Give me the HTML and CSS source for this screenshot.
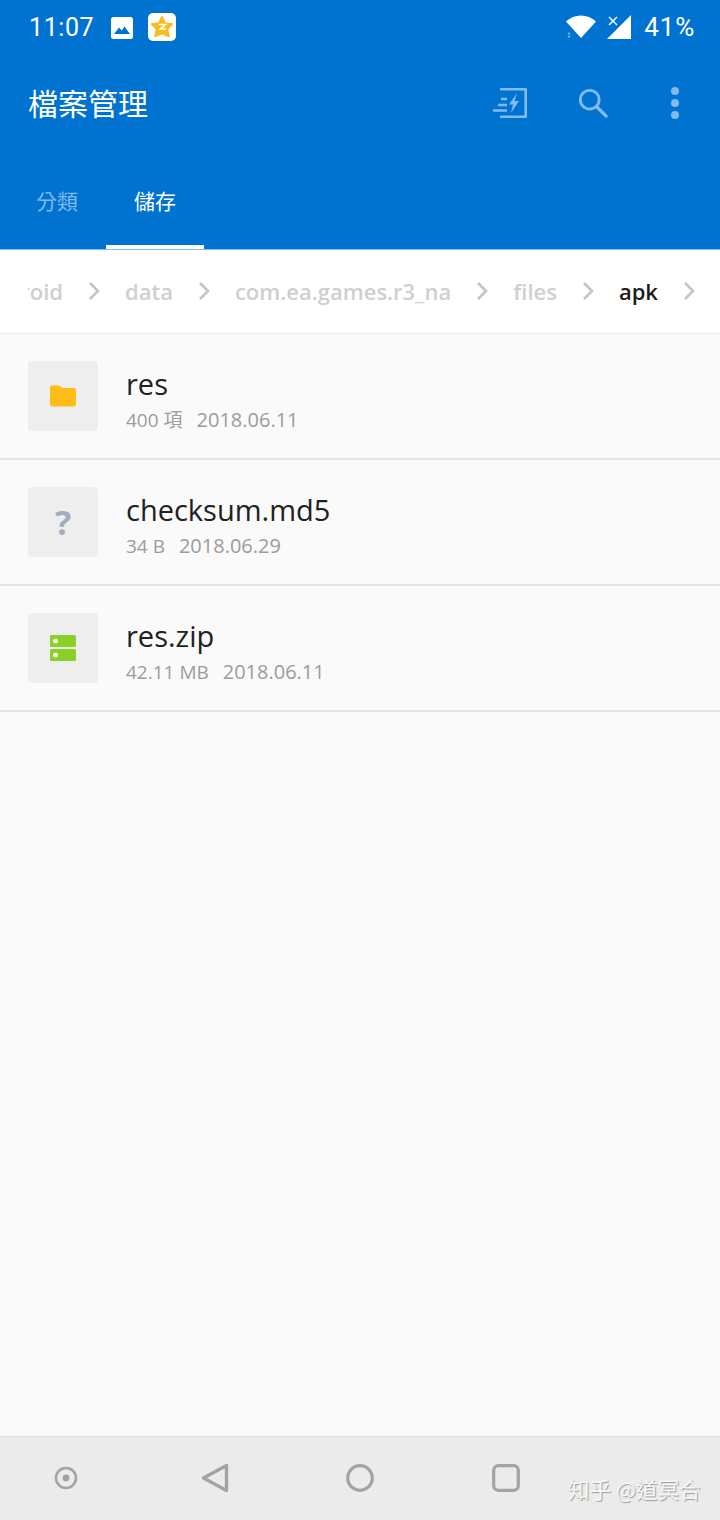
FILE: index.html
```html
<!DOCTYPE html>
<html lang="zh-Hant">
<head>
    <meta charset="UTF-8">
    <meta name="viewport" content="width=device-width, initial-scale=1.0">
    <title>檔案管理</title>
    <link rel="stylesheet" href="styles.css">
</head>
<body>
    <div class="phone">
        <!-- Blue header -->
        <header class="header">
            <div class="status-bar">
                <span class="clock">11:07</span>
                <svg class="notif-image" width="22" height="22" viewBox="0 0 22 22">
                    <rect width="22" height="22" rx="2.5" fill="#fff"/>
                    <path d="M3 17 L8 10.5 L10.8 13.6 L13.5 9.5 L19 17 Z" fill="#0073d1"/>
                </svg>
                <svg class="notif-app" width="28" height="28" viewBox="0 0 28 28">
                    <rect width="28" height="28" rx="5" fill="#fff"/>
                    <path d="M14 3.5 L17.2 10 L24.5 11 L19.5 16.2 L21 23.5 L14 20.5 L7 23.5 L8.5 16.2 L3.5 11 L10.8 10 Z" fill="#f5bd1e" stroke="#f5bd1e" stroke-width="1.5" stroke-linejoin="round"/>
                    <path d="M10.5 11.5 H17.5 L12.5 16 H18" fill="none" stroke="#fff" stroke-width="1.6"/>
                </svg>
                <span class="status-spacer"></span>
                <svg class="wifi" width="32" height="26" viewBox="0 0 32 26">
                    <path d="M1 7.5 C9 -0.5 23 -0.5 31 7.5 L16 24 Z" fill="#fff"/>
                    <path d="M4 18 l-1.6 2.2 h3.2 Z M4 24 l-1.6 -2.2 h3.2 Z" fill="#8fc4ee"/>
                </svg>
                <svg class="signal" width="26" height="26" viewBox="0 0 26 26">
                    <path d="M25 1 V25 H1 Z" fill="#fff"/>
                    <path d="M3 3 L11 11 M11 3 L3 11" stroke="#fff" stroke-width="1.4" fill="none"/>
                </svg>
                <span class="battery">41%</span>
            </div>

            <div class="toolbar">
                <h1 class="title">檔案管理</h1>
                <div class="actions">
                    <svg class="act-transfer" width="34" height="30" viewBox="0 0 34 30">
                        <path d="M7 1.3 H32.7 V28.7 H7" fill="none" stroke="#82bbee" stroke-width="2.6" stroke-linejoin="round"/>
                        <path d="M24 5 L16 16.5 H20 L18 25 L26 13 H21.5 Z" fill="#82bbee"/>
                        <path d="M8 11 H14 M5 17 H14 M0 22.5 H14" stroke="#82bbee" stroke-width="2.6" fill="none"/>
                    </svg>
                    <svg class="act-search" width="30" height="30" viewBox="0 0 32 32">
                        <circle cx="12.5" cy="12.5" r="10" fill="none" stroke="#82bbee" stroke-width="3"/>
                        <path d="M20 20 L30 30" stroke="#82bbee" stroke-width="3.4" stroke-linecap="round"/>
                    </svg>
                    <div class="act-more"><i></i><i></i><i></i></div>
                </div>
            </div>

            <nav class="tabs">
                <div class="tab">分類</div>
                <div class="tab active">儲存</div>
            </nav>
        </header>

        <!-- Path breadcrumb -->
        <div class="crumbs">
            <div class="crumb-cut"><span class="crumb">android</span></div>
            <svg class="chev" width="12" height="20" viewBox="0 0 12 20"><path d="M2 2 L10 10 L2 18"/></svg>
            <span class="crumb">data</span>
            <svg class="chev" width="12" height="20" viewBox="0 0 12 20"><path d="M2 2 L10 10 L2 18"/></svg>
            <span class="crumb">com.ea.games.r3_na</span>
            <svg class="chev" width="12" height="20" viewBox="0 0 12 20"><path d="M2 2 L10 10 L2 18"/></svg>
            <span class="crumb">files</span>
            <svg class="chev" width="12" height="20" viewBox="0 0 12 20"><path d="M2 2 L10 10 L2 18"/></svg>
            <span class="crumb current">apk</span>
            <svg class="chev" width="12" height="20" viewBox="0 0 12 20"><path d="M2 2 L10 10 L2 18"/></svg>
        </div>

        <!-- File list -->
        <main class="file-list">
            <div class="file-row">
                <div class="thumb">
                    <svg width="28" height="24" viewBox="0 0 28 24">
                        <path d="M1 4 Q1 1.5 3.5 1.5 H10 L13.5 4 H24.5 Q27 4 27 6.5 V19.5 Q27 22.5 24 22.5 H4 Q1 22.5 1 19.5 Z" fill="#fbbd16"/>
                    </svg>
                </div>
                <div class="file-info">
                    <div class="file-name">res</div>
                    <div class="file-meta"><span class="file-size">400 項</span><span>2018.06.11</span></div>
                </div>
            </div>
            <div class="file-row">
                <div class="thumb"><span class="unknown">?</span></div>
                <div class="file-info">
                    <div class="file-name">checksum.md5</div>
                    <div class="file-meta"><span class="file-size">34 B</span><span>2018.06.29</span></div>
                </div>
            </div>
            <div class="file-row">
                <div class="thumb">
                    <svg width="28" height="28" viewBox="0 0 28 28">
                        <rect x="1" y="1" width="26" height="12" rx="1.5" fill="#8ccf26"/>
                        <rect x="1" y="15" width="26" height="12" rx="1.5" fill="#8ccf26"/>
                        <circle cx="6.5" cy="7" r="2.5" fill="#eef6dc"/>
                        <circle cx="6.5" cy="21" r="2.5" fill="#eef6dc"/>
                    </svg>
                </div>
                <div class="file-info">
                    <div class="file-name">res.zip</div>
                    <div class="file-meta"><span class="file-size">42.11 MB</span><span>2018.06.11</span></div>
                </div>
            </div>
        </main>

        <!-- Android nav bar -->
        <footer class="nav-bar">
            <svg class="nav-recent" width="24" height="24" viewBox="0 0 24 24">
                <circle cx="12" cy="12" r="10" fill="none" stroke="#a3a3a3" stroke-width="2.6"/>
                <circle cx="12" cy="12" r="3.4" fill="#a3a3a3"/>
            </svg>
            <svg class="nav-back" width="28" height="30" viewBox="0 0 28 30">
                <path d="M25.5 2.5 V27.5 L2.5 15 Z" fill="none" stroke="#a3a3a3" stroke-width="3.4" stroke-linejoin="round"/>
            </svg>
            <svg width="28" height="28" viewBox="0 0 28 28">
                <circle cx="14" cy="14" r="12.3" fill="none" stroke="#a3a3a3" stroke-width="3.2"/>
            </svg>
            <svg width="28" height="28" viewBox="0 0 28 28">
                <rect x="1.7" y="1.7" width="24.6" height="24.6" rx="4.5" fill="none" stroke="#a3a3a3" stroke-width="3.2"/>
            </svg>
            <div class="watermark">知乎 @道冥合</div>
        </footer>
    </div>
</body>
</html>
```

FILE: styles.css
```css
body {
    margin: 0;
    font-family: Roboto, "Noto Sans CJK TC", sans-serif;
    background-color: #fafafa;
}

.phone {
    width: 720px;
    height: 1520px;
    display: flex;
    flex-direction: column;
    overflow: hidden;
}

/* Header */
.header {
    height: 250px;
    box-sizing: border-box;
    background-color: #0073d1;
    border-bottom: 1px solid #7cc0f5;
    color: #ffffff;
}

.status-bar {
    height: 54px;
    display: flex;
    align-items: center;
    padding: 0 25px 0 29px;
}

.clock {
    font-size: 25px;
    letter-spacing: 0.6px;
    width: 82px;
}

.notif-image {
    margin-right: 15px;
    margin-top: 1px;
}

.status-spacer {
    flex: 1;
}

.signal {
    margin: 0 12px 0 9px;
}

.battery {
    font-size: 26px;
    letter-spacing: 0.8px;
}

.toolbar {
    height: 100px;
    display: flex;
    align-items: flex-start;
    padding: 0 28px;
}

.title {
    margin: 26px 0 0;
    font-size: 30px;
    font-weight: 400;
    line-height: 44px;
    font-family: "Noto Sans CJK TC", sans-serif;
    flex: 1;
}

.actions {
    display: flex;
    align-items: center;
    margin-top: 33px;
}

.act-search {
    margin-left: 51px;
}

.act-more {
    display: flex;
    flex-direction: column;
    gap: 4px;
    margin-left: 63px;
    margin-right: 13px;
}

.act-more i {
    display: block;
    width: 8px;
    height: 8px;
    border-radius: 50%;
    background-color: #82bbee;
}

.tabs {
    display: flex;
    height: 95px;
    padding-left: 8px;
}

.tab {
    width: 98px;
    box-sizing: border-box;
    text-align: center;
    font-size: 21px;
    line-height: 30px;
    padding-top: 31px;
    color: #7fb9ec;
    font-family: "Noto Sans CJK TC", sans-serif;
}

.tab.active {
    color: #ffffff;
    border-bottom: 4px solid #ffffff;
}

/* Breadcrumb */
.crumbs {
    height: 84px;
    flex-shrink: 0;
    box-sizing: border-box;
    background-color: #ffffff;
    border-bottom: 1px solid #ececec;
    display: flex;
    align-items: center;
    gap: 25px;
    padding: 0 0 2px 28px;
    overflow: hidden;
}

.crumb {
    font-family: "Open Sans", sans-serif;
    font-size: 22px;
    font-weight: 600;
    color: #cfcfcf;
    white-space: nowrap;
}

.crumb.current {
    color: #1c1c1c;
}

.crumb-cut {
    width: 35px;
    display: flex;
    justify-content: flex-end;
    overflow: hidden;
}

.crumb-cut .crumb {
    flex-shrink: 0;
}

.chev {
    flex-shrink: 0;
    fill: none;
    stroke: #c4c4c4;
    stroke-width: 2.6;
}

/* File rows */
.file-list {
    flex: 1;
    background-color: #fafafa;
}

.file-row {
    height: 126px;
    box-sizing: border-box;
    border-bottom: 2px solid #e4e4e4;
    display: flex;
    align-items: center;
    padding-left: 28px;
}

.thumb {
    width: 70px;
    height: 70px;
    flex-shrink: 0;
    border-radius: 4px;
    background-color: #eeeeee;
    display: flex;
    align-items: center;
    justify-content: center;
}

.unknown {
    font-family: "Open Sans", sans-serif;
    font-size: 34px;
    font-weight: 700;
    color: #a0aec0;
}

.file-info {
    margin-left: 28px;
    margin-top: 7px;
}

.file-name {
    font-family: "Open Sans", sans-serif;
    font-size: 29px;
    line-height: 38px;
    color: #212121;
}

.file-meta {
    font-family: "Open Sans", "Noto Sans CJK TC", sans-serif;
    font-size: 20px;
    line-height: 30px;
    margin-top: 2px;
    color: #9c9c9c;
    display: flex;
    gap: 14px;
}

.file-size {
    font-size: 19px;
}

/* Navigation bar */
.nav-bar {
    position: relative;
    height: 84px;
    flex-shrink: 0;
    box-sizing: border-box;
    background-color: #ebebeb;
    border-top: 1px solid #e2e2e2;
    display: flex;
    align-items: center;
    gap: 118px;
    padding-left: 54px;
    padding-bottom: 1px;
}

.nav-recent {
    margin-right: 5px;
}

.nav-back {
    margin-right: -1px;
}

.watermark {
    position: absolute;
    left: 568px;
    top: 38px;
    font-size: 21.5px;
    line-height: 28px;
    font-family: "Noto Sans CJK SC", sans-serif;
    color: #f7f7f7;
    text-shadow: 1px 1px 1px #9a9a9a;
    white-space: nowrap;
}
```
